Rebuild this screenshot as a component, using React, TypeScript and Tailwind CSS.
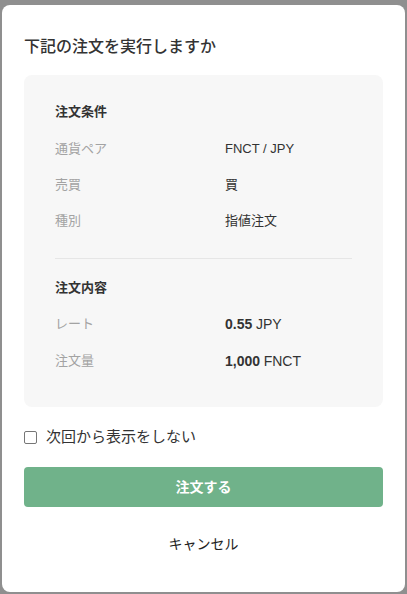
import React from "react";

const font = { fontFamily: '"Liberation Sans", "Noto Sans CJK JP", sans-serif' };

function Row({ label, children }: { label: string; children: React.ReactNode }) {
  return (
    <div className="grid grid-cols-[170px_1fr] text-[13px] leading-[20px]">
      <div className="text-[#a3a3a3]">{label}</div>
      <div className="text-[#333333]">{children}</div>
    </div>
  );
}

export default function App() {
  return (
    <div className="w-[407px] h-[594px] bg-[#8f8f8f] pt-[5px] pl-[2px] pr-[2px] overflow-hidden" style={font}>
      <div className="h-[587px] bg-white rounded-[8px] px-[22px] pt-[30px] flex flex-col">
        <h1 className="text-[16px] leading-[24px] font-medium text-[#333333]">下記の注文を実行しますか</h1>
        <div className="mt-[16px] bg-[#f7f7f7] rounded-[8px] px-[31px] pt-[27px] pb-[35px]">
          <div className="text-[13px] leading-[20px] font-bold text-[#333333]">注文条件</div>
          <div className="mt-[17px] flex flex-col gap-[16px]">
            <Row label="通貨ペア">FNCT / JPY</Row>
            <Row label="売買">買</Row>
            <Row label="種別">指値注文</Row>
          </div>
          <div className="mt-[27px] h-px bg-[#e6e6e6]" />
          <div className="mt-[19px] text-[13px] leading-[20px] font-bold text-[#333333]">注文内容</div>
          <div className="mt-[16px] flex flex-col gap-[16px]">
            <Row label="レート">
              <span className="font-bold text-[14px]">0.55</span> <span className="text-[14px]">JPY</span>
            </Row>
            <Row label="注文量">
              <span className="font-bold text-[14px]">1,000</span> <span className="text-[14px]">FNCT</span>
            </Row>
          </div>
        </div>
        <label className="mt-[20px] flex items-center gap-[9px] text-[15px] leading-[20px] text-[#333333]">
          <span className="w-[13px] h-[13px] border border-[#767676] rounded-[2px] bg-white" />
          次回から表示をしない
        </label>
        <button className="mt-[20px] h-[40px] w-full rounded-[4px] bg-[#70b28a] text-white text-[14px] font-bold">
          注文する
        </button>
        <div className="mt-[27px] text-center text-[14px] leading-[20px] text-[#222222]">キャンセル</div>
      </div>
    </div>
  );
}
